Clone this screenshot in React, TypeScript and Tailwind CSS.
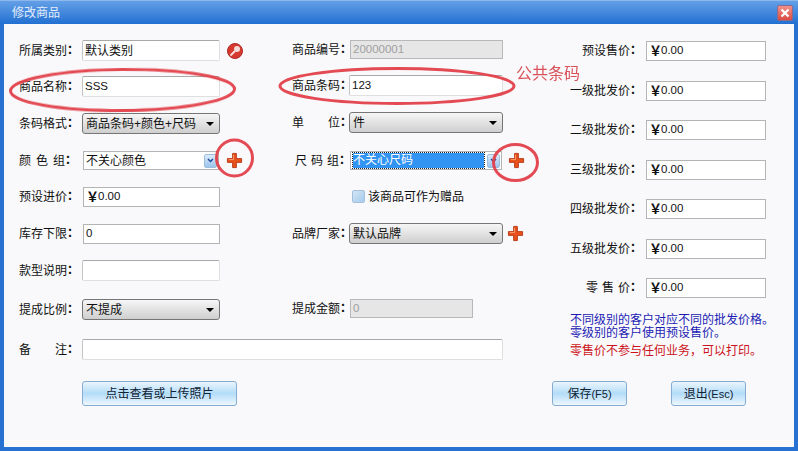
import React from 'react';

const CJK = "font-['Liberation_Sans','Noto_Sans_CJK_SC',sans-serif]";

function Colon() {
  return <span className="font-bold leading-[12px] align-[1px]">：</span>;
}

function Plus() {
  return (
    <svg width="17" height="17" viewBox="0 0 18 18" className="shrink-0">
      <path d="M7 1.500h4v5.500h5.500v4H11v5.500H7V11H1.500V7H7z" fill="#e8501c" stroke="#b83a18" strokeWidth="1" />
      <path d="M8 3v5H3" fill="none" stroke="#f7a070" strokeWidth="1" />
    </svg>
  );
}

function SearchIcon() {
  return (
    <svg width="18" height="18" viewBox="0 0 18 18" className="shrink-0">
      <circle cx="9" cy="9" r="7.500" fill="#d8392f" stroke="#a82a24" />
      <circle cx="11" cy="7" r="3" fill="#f6dcd8" />
      <path d="M9 9l-4.500 4.500" stroke="#f6dcd8" strokeWidth="2" />
    </svg>
  );
}

function TextBox({ children, className = '' }: { children?: React.ReactNode; className?: string }) {
  return (
    <div className={`flex items-center h-[21px] bg-white rounded-[2px] border border-[#dfdfdf] border-t-[#a8a8a8] border-l-[#c4c4c4] pl-[2px] text-[12px] text-[#111] ${className}`}>
      {children}
    </div>
  );
}

function SquareBox({ children, className = '' }: { children?: React.ReactNode; className?: string }) {
  return (
    <div className={`flex items-center h-[20px] bg-white border-[1.5px] border-[#b4b4b4] pl-[2px] text-[12px] text-[#111] ${className}`}>
      {children}
    </div>
  );
}

function Select({ value, className = '' }: { value: string; className?: string }) {
  return (
    <div className={`flex items-center justify-between h-[21px] rounded-[3px] border border-[#767676] bg-gradient-to-b from-[#f6f6f6] to-[#cfcfcf] pl-[3px] pr-[5px] text-[12px] text-[#111] ${className}`}>
      <span>{value}</span>
      <span className="w-0 h-0 border-x-[4px] border-x-transparent border-t-[4px] border-t-black" />
    </div>
  );
}

function Combo({ value, selected = false, className = '' }: { value: string; selected?: boolean; className?: string }) {
  return (
    <div className={`flex items-center h-[19px] bg-white border-[1.5px] border-[#b4b4b4] pl-[2px] pr-[1px] text-[12px] text-[#111] ${className}`}>
      {selected ? (
        <span className="flex-1 h-[15px] leading-[14px] bg-[#3294f2] text-white outline-1 outline-dotted outline-[#222]">{value}</span>
      ) : (
        <span className="flex-1">{value}</span>
      )}
      <span className="flex items-center justify-center ml-[3px] w-[13px] h-[14px] rounded-[2px] border border-[#9fbfdc] bg-gradient-to-b from-[#dbeafa] to-[#9cc4ec]">
        <svg width="7" height="5" viewBox="0 0 7 5">
          <path d="M1 1l2.500 2.500L6 1" fill="none" stroke="#1d4f9c" strokeWidth="1.500" />
        </svg>
      </span>
    </div>
  );
}

function Yuan() {
  return (
    <>
      <span className="w-[12px] text-center text-[13px] leading-[16px] font-bold">￥</span>
      <span className="text-[11.500px]">0.00</span>
    </>
  );
}

function Field({ label, width, children, className = '' }: { label: React.ReactNode; width: string; children: React.ReactNode; className?: string }) {
  return (
    <div className={`flex items-center self-start ${className}`}>
      <div className={`${width} shrink-0 whitespace-nowrap text-[12px] text-[#111]`}>{label}</div>
      {children}
    </div>
  );
}

function GlossButton({ children, className = '' }: { children: React.ReactNode; className?: string }) {
  return (
    <button className={`h-[25px] rounded-[3px] border border-[#86add0] bg-gradient-to-b from-[#eaf5fd] via-[#b3dcf8] to-[#eef7fd] text-[12px] text-[#123] ${className}`}>
      {children}
    </button>
  );
}

const prices = ['预设售价', '一级批发价', '二级批发价', '三级批发价', '四级批发价', '五级批发价'];

export default function App() {
  return (
    <div className={`relative flex flex-col w-[798px] h-[451px] overflow-hidden bg-[#2771d2] ${CJK}`}>
      {/* title bar */}
      <div className="flex items-center justify-between h-[24px] pl-[12px] pr-[5px] border-t border-[#8db8ee] bg-gradient-to-b from-[#639fe6] to-[#2070d2]">
        <span className="text-[12px] text-[#e4eefa]">修改商品</span>
        <span className="flex items-center justify-center w-[16px] h-[16px] rounded-[2px] border border-[#8a6a90] bg-gradient-to-b from-[#f0908a] to-[#d94a42]">
          <svg width="10" height="10" viewBox="0 0 10 10">
            <path d="M1.500 1.500l7 7M8.500 1.500l-7 7" stroke="#fff" strokeWidth="2.200" />
          </svg>
        </span>
      </div>

      <div className="flex flex-col flex-1 mx-[4px] mb-[4px] bg-[#f9f9fb] pl-[15px] pt-[16px]">
        <div className="flex">
          {/* left and middle columns */}
          <div className="w-[551px] shrink-0">
            <div className="grid grid-cols-[273px_278px] grid-rows-[36px_37px_38px_36px_37px_36px_39px_40px]">
              <Field label={<>所属类别<Colon /></>} width="w-[63px]">
                <TextBox className="w-[138px]">默认类别</TextBox>
                <span className="ml-[6px]"><SearchIcon /></span>
              </Field>
              <Field label={<>商品编号<Colon /></>} width="w-[58px]">
                <div className="flex items-center h-[19px] w-[153px] bg-[#e6e6e6] border border-[#b8b8b8] pl-[2px] text-[11.500px] text-[#a0a0a0]">20000001</div>
              </Field>

              <Field label={<>商品名称<Colon /></>} width="w-[63px]">
                <TextBox className="w-[138px]"><span className="text-[11.500px]">SSS</span></TextBox>
              </Field>
              <Field label={<>商品条码<Colon /></>} width="w-[57px]" className="mt-[-1px]">
                <TextBox className="w-[154px]"><span className="text-[11.500px]">123</span></TextBox>
              </Field>

              <Field label={<>条码格式<Colon /></>} width="w-[63px]">
                <Select value="商品条码+颜色+尺码" className="w-[138px]" />
              </Field>
              <Field label={<>单<span className="ml-[24px]">位</span><Colon /></>} width="w-[57px]" className="mt-[-1px]">
                <Select value="件" className="w-[154px]" />
              </Field>

              <Field label={<><span className="tracking-[5px]">颜色</span>组<Colon /></>} width="w-[64px]">
                <Combo value="不关心颜色" className="w-[136px]" />
                <span className="ml-[7px]"><Plus /></span>
              </Field>
              <Field label={<span className="pl-[3px]"><span className="tracking-[4px]">尺码</span>组<Colon /></span>} width="w-[58px]">
                <Combo value="不关心尺码" selected className="w-[152px]" />
                <span className="ml-[6px]"><Plus /></span>
              </Field>

              <Field label={<>预设进价<Colon /></>} width="w-[64px]">
                <SquareBox className="w-[137px]"><Yuan /></SquareBox>
              </Field>
              <div className="flex items-center self-start h-[15px] mt-[2px] ml-[60px] text-[12px] text-[#111]">
                <span className="w-[13px] h-[13px] mr-[3px] rounded-[2px] border border-[#a4c0da] bg-gradient-to-br from-[#d3e5f5] to-[#a6cbec]" />
                该商品可作为赠品
              </div>

              <Field label={<>库存下限<Colon /></>} width="w-[64px]">
                <SquareBox className="w-[137px]"><span className="text-[11.500px]">0</span></SquareBox>
              </Field>
              <Field label={<>品牌厂家<Colon /></>} width="w-[57px]" className="mt-[-1px]">
                <Select value="默认品牌" className="w-[154px]" />
                <span className="ml-[4px]"><Plus /></span>
              </Field>

              <Field label={<>款型说明<Colon /></>} width="w-[63px]" className="col-span-2">
                <TextBox className="w-[138px]" />
              </Field>

              <Field label={<>提成比例<Colon /></>} width="w-[63px]">
                <Select value="不提成" className="w-[138px]" />
              </Field>
              <Field label={<>提成金额<Colon /></>} width="w-[58px]">
                <div className="flex items-center h-[19px] w-[123px] bg-[#e6e6e6] border border-[#b8b8b8] pl-[2px] text-[11.500px] text-[#a0a0a0]">0</div>
              </Field>
            </div>

            <Field label={<>备<span className="ml-[24px]">注</span><Colon /></>} width="w-[63px]">
              <TextBox className="w-[421px]" />
            </Field>
          </div>

          {/* price column */}
          <div className="flex flex-col flex-1 pt-[1px] whitespace-nowrap">
            <div className="flex flex-col gap-[19.500px]">
              {prices.map((label) => (
                <div key={label} className="flex items-center justify-end w-[196px]">
                  <span className="text-[12px] text-[#111]">{label}<Colon /></span>
                  <SquareBox className="w-[120px] ml-[4px]"><Yuan /></SquareBox>
                </div>
              ))}
              <div className="flex items-center justify-end w-[196px]">
                <span className="text-[12px] text-[#111]"><span className="tracking-[4px]">零售</span>价<Colon /></span>
                <SquareBox className="w-[120px] ml-[4px]"><Yuan /></SquareBox>
              </div>
            </div>
            <div className="mt-[16px] text-[12px] leading-[12.500px] text-[#1c1cb4]">
              <p>不同级别的客户对应不同的批发价格。</p>
              <p>零级别的客户使用预设售价。</p>
            </div>
            <p className="mt-[6px] text-[12px] leading-[13px] text-[#cc1420]">零售价不参与任何业务，可以打印。</p>
          </div>
        </div>

        <div className="flex mt-[21px] pl-[63px]">
          <GlossButton className="w-[155px]">点击查看或上传照片</GlossButton>
          <GlossButton className="w-[75px] ml-[315px]">保存<span className="text-[11px]">(F5)</span></GlossButton>
          <GlossButton className="w-[75px] ml-[44px]">退出<span className="text-[11px]">(Esc)</span></GlossButton>
        </div>
      </div>

      {/* hand drawn annotations over the screenshot */}
      <svg width="798" height="451" viewBox="0 0 798 451" className="absolute left-0 top-0 pointer-events-none">
        <g fill="none" stroke="#e2414a" strokeWidth="3" opacity="0.95">
          <ellipse cx="122.500" cy="90" rx="112" ry="20.500" transform="rotate(-0.500 122.500 90)" />
          <ellipse cx="397" cy="86" rx="117" ry="17.500" />
          <ellipse cx="234.500" cy="158" rx="18" ry="18" />
          <ellipse cx="515.500" cy="162.500" rx="22" ry="18" />
        </g>
      </svg>
      <span className="absolute left-[516px] top-[64px] text-[16px] leading-[20px] text-[#d9525a]">公共条码</span>
    </div>
  );
}
